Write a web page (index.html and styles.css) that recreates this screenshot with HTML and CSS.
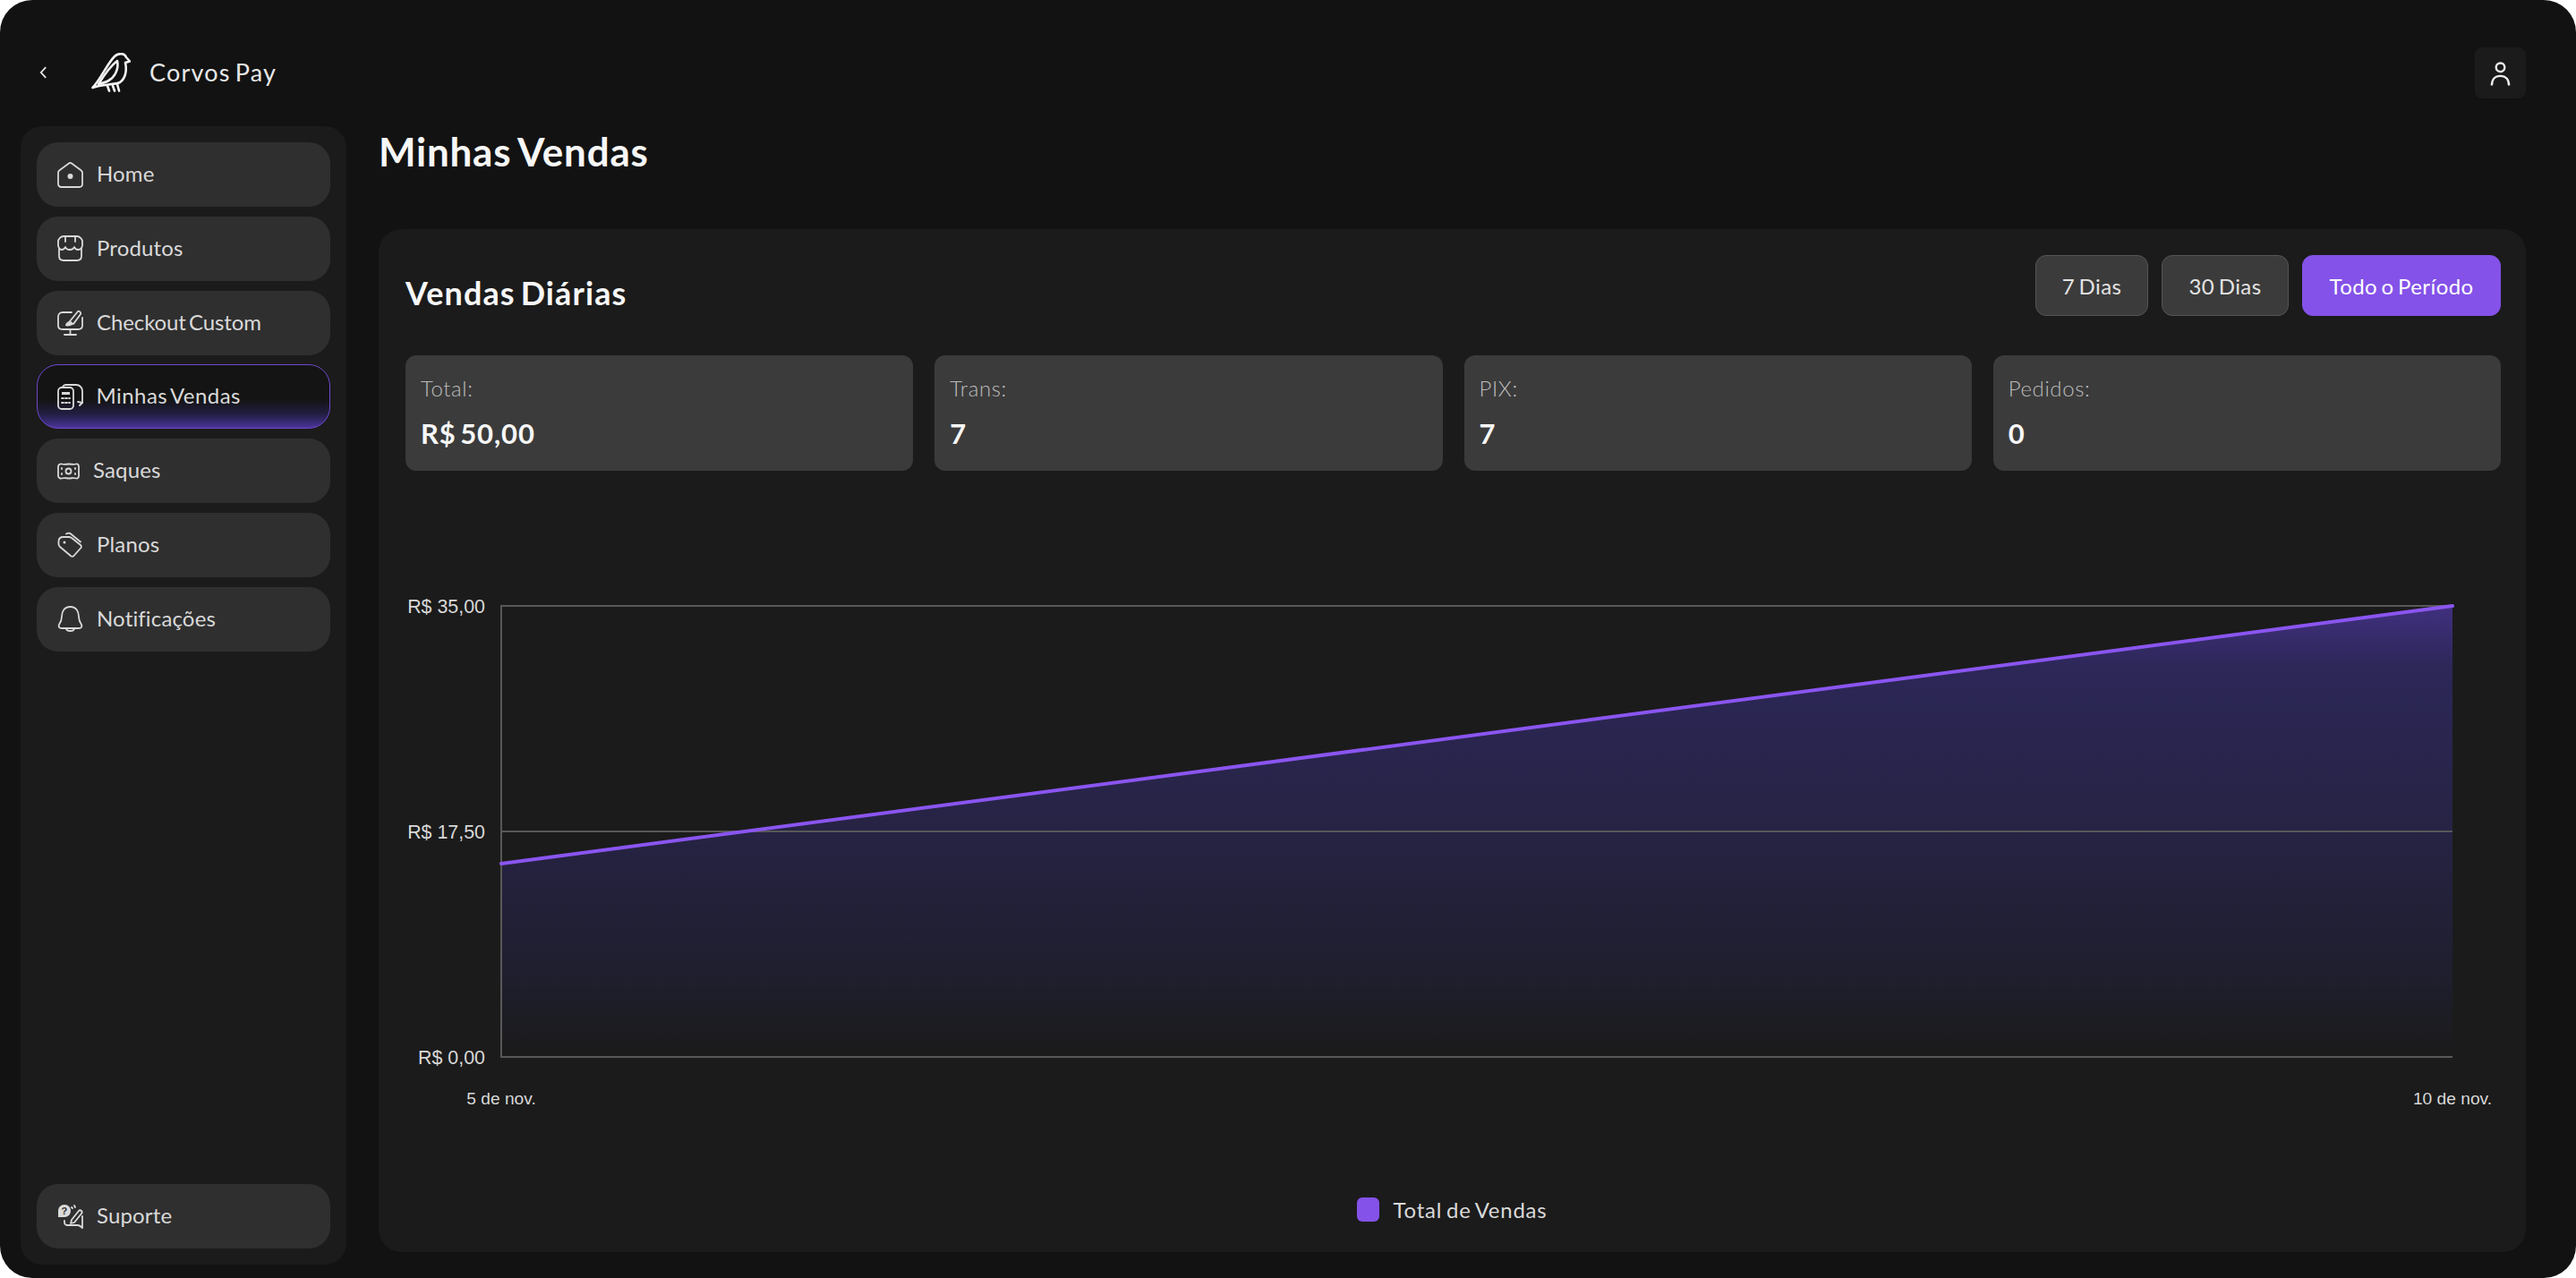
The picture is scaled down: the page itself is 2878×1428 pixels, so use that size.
FILE: index.html
```html
<!DOCTYPE html>
<html lang="pt-BR">
<head>
<meta charset="utf-8">
<title>Corvos Pay</title>
<link rel="stylesheet" href="styles.css">
</head>
<body>
<div class="app">
  <header class="topbar">
    <div class="brand">
      <svg class="chev" viewBox="0 0 10 16"><path d="M8 1.500 2 8l6 6.500"/></svg>
      <svg class="bird" viewBox="0 0 44 44"><path d="M1.500 39C10 30 18 12 26 4c4-4 11-4 13 1l4 4.500-5 1.500c2 9 0 18-6 22-6 3-20 2-30.500 6Z"/><path d="M29 9C21 15 13 27 8 35c8-2 15-4 19-12 2-4 3-10 2-14Z"/><path d="m18 37 2 5.500M24 37l2 5.500M29 35l2 7.500"/></svg>
      <span class="brand-name">Corvos Pay</span>
    </div>
    <button class="profile"><svg viewBox="0 0 24 30"><circle cx="12" cy="8" r="5"/><path d="M2 29c0-7 4-11 10-11s10 4 10 11"/></svg></button>
  </header>
  <div class="body">
    <aside class="sidebar">
      <nav class="nav">
        <a class="item"><svg class="ico" viewBox="0 0 29 29"><path d="M1 12c0-1 .5-2 1.500-2.700L13 1.500c1-.7 2-.7 3 0l10.500 7.800c1 .7 1.500 1.700 1.500 2.700v12.500c0 2-1.500 3.500-3.500 3.500h-20C2.500 28 1 26.500 1 24.500Z"/><circle class="solid" cx="14.500" cy="16" r="3"/></svg><span>Home</span></a>
        <a class="item"><svg class="ico" viewBox="0 0 29 29"><path d="M7 1h15c3 0 6 3 6 6v4c0 3-2.500 5-4.500 5-2 0-4-1.500-4.500-3-.5 1.500-2.500 3-5 3s-4.500-1.500-5-3c-.5 1.500-2.500 3-4.500 3C3.500 16 1 14 1 11V7c0-3 3-6 6-6Z"/><path d="M9 1v6M20 1v6M2 15v8c0 3 2 5 5 5h15c3 0 5-2 5-5v-8"/></svg><span>Produtos</span></a>
        <a class="item"><svg class="ico" viewBox="0 0 29 29"><path d="M16 3H6C3 3 1 5 1 8v10c0 3 2 4 5 4h17c3 0 5-1 5-4V9M14.500 22v5M8 28h13"/><path d="m14 13 9-11c1-1 4 1 3 3l-8 11"/><path class="solid" d="M9 18c0-3 3-5 5-5 2 0 4 2 4 3-2 2-6 3-9 2Z"/></svg><span class="tight">Checkout Custom</span></a>
        <a class="item active"><svg class="ico" viewBox="0 0 29 29"><rect x="1" y="4" width="17" height="24" rx="4"/><path d="M6 4c0-2 2-3 4-3h11c4 0 7 3 7 7v13"/><path d="M23 20l5 1-3 3"/><rect class="solid" x="5" y="9" width="9" height="3"/><path d="M5 16h2M9 16h2M13 16h1M5 21h2M9 21h2M13 21h1"/></svg><span class="loose">Minhas Vendas</span></a>
        <a class="item"><svg class="ico wide" viewBox="0 0 25 19"><path d="M5 1.500c3 1 5 0 8 0s5 1 8 0c2-.5 3 1 3 3v10c0 2-1 3.500-3 3-3-1-5 0-8 0s-5-1-8 0c-2 .5-4-1-4-3v-10c0-2 2-3.500 4-3Z"/><circle cx="12.500" cy="9.500" r="3"/><path d="M5 6v1M5 12v1M20 6v1M20 12v1"/></svg><span>Saques</span></a>
        <a class="item"><svg class="ico" viewBox="0 0 29 29"><path d="M7 6h6c1 0 2 .5 3 1l10 8c1 1 1 2 .5 3l-8 9c-1 1-2 1-3 .5L3 17c-1-1-1.500-2-1.500-3V11c0-3 2-5 5.500-5Z"/><path d="M10 2.500c2-1 4-1 5 0l11 9"/><circle class="solid" cx="8" cy="12" r="1.500"/></svg><span>Planos</span></a>
        <a class="item"><svg class="ico" viewBox="0 0 29 29"><path d="M14.500 1C8 1 5 6 5 12c0 4-1 6-3 9-1 2 0 4 3 4h19c3 0 4-2 3-4-2-3-3-5-3-9 0-6-3-11-9.500-11Z"/><path d="M10 25c0 2 2 3 4.500 3s4.500-1 4.500-3"/></svg><span>Notificações</span></a>
      </nav>
      <a class="item"><svg class="ico" viewBox="0 0 29 29"><path class="solid" d="M8 1c4 0 7 3 7 7s-3 7-7 7H1V8c0-4 3-7 7-7Z"/><text class="q" x="8" y="12">?</text><path d="M8 19v2c0 1 1 3 3 3h12c2 0 4 2 5 3V14M16 18l8-10c1-1 2-1 3 0s1 2 0 3l-8 10-4 1ZM16 4l1 1M19 2l1 2"/></svg><span>Suporte</span></a>
    </aside>
    <main class="main">
      <h1 class="page-title">Minhas Vendas</h1>
      <section class="card">
        <div class="card-head">
          <h2 class="card-title">Vendas Diárias</h2>
          <div class="filters">
            <button class="filter f7">7 Dias</button>
            <button class="filter f30">30 Dias</button>
            <button class="filter on">Todo o Período</button>
          </div>
        </div>
        <div class="stats">
          <div class="stat"><span class="stat-label">Total:</span><strong class="stat-value">R$ 50,00</strong></div>
          <div class="stat"><span class="stat-label">Trans:</span><strong class="stat-value">7</strong></div>
          <div class="stat"><span class="stat-label">PIX:</span><strong class="stat-value">7</strong></div>
          <div class="stat"><span class="stat-label">Pedidos:</span><strong class="stat-value">0</strong></div>
        </div>
        <div class="chart">
          <svg class="plot" viewBox="0 0 2398 700" width="2398" height="700">
            <defs>
              <linearGradient id="fill" gradientUnits="userSpaceOnUse" x1="0" y1="111" x2="0" y2="615">
                <stop offset="0" stop-color="#41307f"/>
                <stop offset=".14" stop-color="#2c2757"/>
                <stop offset=".5" stop-color="#262344"/>
                <stop offset=".84" stop-color="#1e1e2c"/>
                <stop offset="1" stop-color="#1b1b1b"/>
              </linearGradient>
            </defs>
            <path class="area" d="M137 399 2317 111V615H137Z"/>
            <path class="grid" d="M137 111H2317M137 363H2317M137 110V616M136 615H2317"/>
            <path class="line" d="M137 399 2317 111"/>
            <text class="y" x="119" y="119">R$ 35,00</text>
            <text class="y" x="119" y="371">R$ 17,50</text>
            <text class="y" x="119" y="623">R$ 0,00</text>
            <text class="x" x="137" y="668">5 de nov.</text>
            <text class="x" x="2317" y="668">10 de nov.</text>
          </svg>
        </div>
        <div class="legend"><i class="swatch"></i><span>Total de Vendas</span></div>
      </section>
    </main>
  </div>
</div>
</body>
</html>
```
FILE: styles.css
```css
* { box-sizing: border-box; }
html, body { margin: 0; height: 100%; background: #fff; }
body { font-family: "Lato", "Liberation Sans", sans-serif; color: #fff; overflow: hidden; }
.app { width: 2878px; height: 1428px; background: #121212; border-radius: 36px; display: flex; flex-direction: column; overflow: hidden; }

.topbar { height: 141px; flex: none; display: flex; align-items: flex-start; justify-content: space-between; padding: 53px 56px 0 44px; }
.brand { display: flex; align-items: center; height: 58px; }
.chev { width: 9px; height: 16px; fill: none; stroke: #e6e6e6; stroke-width: 2; margin-right: 49px; margin-top: -2px; }
.bird { width: 44px; height: 44px; fill: none; stroke: #f5f5f5; stroke-width: 2.600; stroke-linejoin: round; stroke-linecap: round; margin-right: 22px; margin-top: -2px; }
.brand-name { font-size: 27px; letter-spacing: 1.200px; word-spacing: -3px; color: #e8e8e8; margin: -3px 0 0 -1px; }
.profile { width: 57px; height: 57px; border: 0; padding: 0; border-radius: 8px; background: #1b1b1b; display: flex; align-items: center; justify-content: center; }
.profile svg { width: 23px; height: 30px; fill: none; stroke: #efefef; stroke-width: 2.500; }

.body { flex: 1; display: flex; gap: 36px; padding: 0 56px 0 23px; min-height: 0; }
.sidebar { width: 364px; flex: none; height: 1272px; background: #1b1b1b; border-radius: 24px; padding: 18px; display: flex; flex-direction: column; justify-content: space-between; }
.nav { display: flex; flex-direction: column; gap: 10.800px; }
.item { height: 72px; flex: none; display: flex; align-items: center; gap: 15px; padding-left: 23px; background: #2f2f2f; border-radius: 24px; font-size: 24px; letter-spacing: .15px; word-spacing: -3px; color: #d9d9d9; }
.item span { margin-top: -3px; }
.item .tight { letter-spacing: -.1px; }
.item .loose { letter-spacing: .45px; }
.item.active { background: linear-gradient(180deg, #141414 0%, #141414 55%, #211e42 78%, #4a3599 100%); border: 1.500px solid #7048cc; padding-left: 21.500px; }
.ico { width: 29px; height: 29px; flex: none; fill: none; stroke: #d9d9d9; stroke-width: 1.800; stroke-linejoin: round; stroke-linecap: round; }
.ico.wide { width: 25px; height: 19px; }
.ico .solid { fill: #d9d9d9; stroke: none; }
.ico .q { fill: #2f2f2f; stroke: none; font: 700 11px "Liberation Sans", sans-serif; text-anchor: middle; }

.main { flex: 1; min-width: 0; display: flex; flex-direction: column; height: 1258px; }
.page-title { margin: 0; height: 115px; flex: none; font-size: 44px; line-height: 56px; font-weight: 700; color: #f7f7f7; letter-spacing: .75px; word-spacing: -3px; }
.card { flex: 1; min-height: 0; background: #1b1b1b; border-radius: 26px; padding: 29px 28px 0 30px; display: flex; flex-direction: column; }
.card-head { height: 68px; flex: none; display: flex; align-items: center; justify-content: space-between; }
.card-title { margin: 15px 0 0; font-size: 36px; font-weight: 700; color: #f7f7f7; letter-spacing: 1.100px; word-spacing: -4px; }
.filters { display: flex; gap: 15px; }
.filter { height: 68px; border: 1px solid #555; border-radius: 12px; background: #3b3b3b; color: #e4e4e4; font: 400 24px "Lato", sans-serif; letter-spacing: .4px; word-spacing: -2px; padding: 0; }
.f7 { width: 126px; }
.f30 { width: 142px; }
.filter.on { width: 222px; background: #8452e8; border-color: #8452e8; color: #fff; }

.stats { display: grid; grid-template-columns: repeat(4, 1fr); gap: 24px; margin-top: 44px; flex: none; }
.stat { height: 129px; background: #3b3b3b; border-radius: 12px; padding: 21px 17px 0; display: flex; flex-direction: column; gap: 14px; }
.stat-label { font-size: 24px; font-weight: 300; line-height: 32px; letter-spacing: .6px; color: #bbb; }
.stat-value { font-size: 31px; font-weight: 700; line-height: 40px; letter-spacing: .9px; color: #f7f7f7; word-spacing: -4px; }

.chart { flex: none; margin: 40px 0 0 -30px; height: 700px; }
.plot { display: block; overflow: visible; }
.area { fill: url(#fill); }
.grid { fill: none; stroke: #585858; stroke-width: 2; }
.line { fill: none; stroke: #8a55f0; stroke-width: 4; stroke-linecap: round; }
.y, .x { font-family: "Liberation Sans", sans-serif; fill: #d8d8d8; }
.y { font-size: 21.400px; text-anchor: end; }
.x { font-size: 19.200px; text-anchor: middle; }

.legend { display: flex; align-items: center; justify-content: center; gap: 16px; margin-top: 71px; padding-right: 3px; }
.swatch { width: 25px; height: 27px; border-radius: 6px; background: #8452e8; }
.legend span { font-size: 24px; letter-spacing: .75px; word-spacing: -2px; color: #d9d9d9; }
```
